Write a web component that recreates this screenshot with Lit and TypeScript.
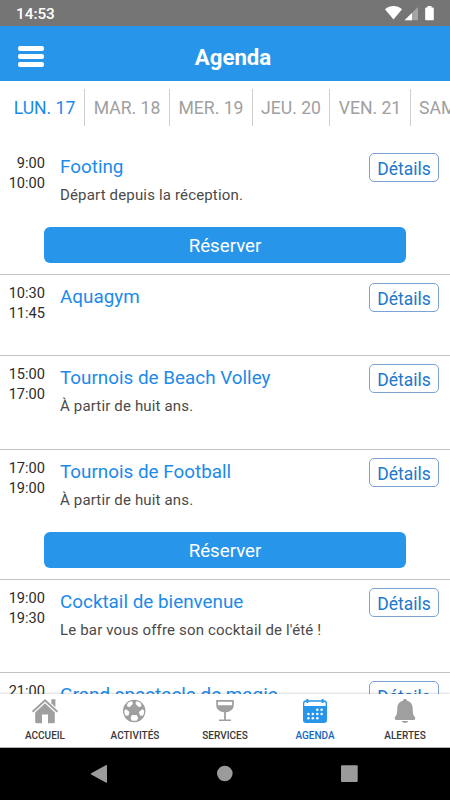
import { LitElement, html, css, svg, nothing } from "lit";
import { customElement } from "lit/decorators.js";
import { classMap } from "lit/directives/class-map.js";

interface AgendaEvent {
  start: string;
  end: string;
  title: string;
  note?: string;
  bookable?: boolean;
  size: string;
}

const DAYS = [
  { label: "LUN. 17", key: "mon" },
  { label: "MAR. 18", key: "tue" },
  { label: "MER. 19", key: "wed" },
  { label: "JEU. 20", key: "thu" },
  { label: "VEN. 21", key: "fri" },
  { label: "SAM. 22", key: "sat" },
];

const EVENTS: AgendaEvent[] = [
  { start: "9:00", end: "10:00", title: "Footing", note: "Départ depuis la réception.", bookable: true, size: "tall" },
  { start: "10:30", end: "11:45", title: "Aquagym", size: "short" },
  { start: "15:00", end: "17:00", title: "Tournois de Beach Volley", note: "À partir de huit ans.", size: "medium" },
  { start: "17:00", end: "19:00", title: "Tournois de Football", note: "À partir de huit ans.", bookable: true, size: "tall" },
  { start: "19:00", end: "19:30", title: "Cocktail de bienvenue", note: "Le bar vous offre son cocktail de l'été !", size: "medium" },
  { start: "21:00", end: "22:30", title: "Grand spectacle de magie", size: "medium" },
];

const ICONS = {
  home: svg`
    <path d="M20.4 1.2h4v8l-4-4z"/>
    <path d="M1.600 13.800 14 2.200l12.400 11.600" fill="none" stroke="currentColor" stroke-width="1.900"/>
    <path d="M14 5.200 4.200 14.400V24q0 1.300 1.300 1.300H11V16.500h6v8.800h5.500q1.300 0 1.300-1.300v-9.600z"/>`,
  ball: svg`
    <circle cx="13.200" cy="13" r="11.200"/>
    <g fill="#fff">
      <path d="M11.300 16.900h4q.6 0 .8.600l.9 2.600q.2.600-.3 1l-.8 1.200q-.3.500-.9.500h-3.400q-.6 0-.9-.5l-.8-1.200q-.4-.4-.2-1l.9-2.600q.2-.6.700-.6z"/>
      <path d="M6.800 4.900q2-1.600 3.700-1.700.6 0 .8.500l.5 1.500q.1.600-.3 1L9 8.700q-.5.400-1.100.2l-1.200-.3q-.6-.2-.6-.8-.2-1.600.7-2.900z"/>
      <path d="M19.600 4.900q-2-1.600-3.700-1.700-.6 0-.8.500l-.5 1.500q-.1.600.3 1l2.500 2.500q.5.400 1.100.2l1.200-.3q.6-.2.600-.8.200-1.600-.7-2.900z"/>
      <path d="M3.300 13.400q0-.6.400-1.100l.7-.7q.5-.5 1 0l2.600 2q.4.400.3.900l-.6 2.400q-.2.600-.8.700l-1.700.2q-.6 0-.8-.5-1.100-1.800-1.100-3.900z"/>
      <path d="M23.100 13.400q0-.6-.4-1.100l-.7-.7q-.5-.5-1 0l-2.600 2q-.4.400-.3.900l.6 2.400q.2.600.8.700l1.700.2q.6 0 .8-.5 1.100-1.800 1.100-3.900z"/>
    </g>`,
  glass: svg`
    <path fill-rule="evenodd" d="M5.200 2.100h17.600v4.500c0 4.700-3.300 7.300-7.900 7.600v7.200h5.100v1.500H8v-1.500h5.100v-7.200c-4.600-.3-7.900-2.900-7.900-7.600zM6.900 3.700v3.600h14.200V3.700z"/>`,
  calendar: svg`
    <path fill-rule="evenodd" d="M5.400 2.300V.9h1.900v1.400h13.400V.9h1.900v1.400c2.300 0 3.400 1.200 3.400 3.100v16.700c0 1.800-1.100 3-3 3H5c-1.900 0-3-1.200-3-3V5.400c0-1.900 1.100-3.100 3.400-3.100zM3.300 8h21.400V5.700c0-1.300-.9-2-2.100-2v1.200h-1.900V3.700H7.300v1.200H5.400V3.700c-1.200 0-2.100.7-2.100 2z"/>
    <g fill="#fff">
      <circle cx="16.300" cy="11.700" r="1.250"/><circle cx="20.600" cy="11.700" r="1.250"/>
      <circle cx="7.400" cy="16" r="1.250"/><circle cx="11.800" cy="16" r="1.250"/><circle cx="16.300" cy="16" r="1.250"/><circle cx="20.600" cy="16" r="1.250"/>
      <circle cx="7.400" cy="20.300" r="1.250"/><circle cx="11.800" cy="20.300" r="1.250"/><circle cx="16.300" cy="20.300" r="1.250"/>
    </g>`,
  bell: svg`
    <path d="M14 1c1.200 0 2 .7 2 1.700 3.700.9 5.700 3.900 5.700 7.700 0 5.200.7 6.900 2.300 8.600.5.600.2 3-.8 3H4.800c-1 0-1.300-2.400-.8-3 1.600-1.700 2.300-3.400 2.300-8.600 0-3.800 2-6.800 5.700-7.700 0-1 .8-1.700 2-1.700z"/>
    <path d="M10.600 22.900h6.800c-.7 1.300-1.900 2-3.400 2s-2.700-.7-3.400-2z"/>`,
};

const NAV = [
  { label: "ACCUEIL", icon: ICONS.home },
  { label: "ACTIVITÉS", icon: ICONS.ball },
  { label: "SERVICES", icon: ICONS.glass },
  { label: "AGENDA", icon: ICONS.calendar, active: true },
  { label: "ALERTES", icon: ICONS.bell },
];

@customElement("app-root")
export class AppRoot extends LitElement {
  static styles = css`
    :host {
      display: flex;
      flex-direction: column;
      height: 800px;
      width: 450px;
      overflow: hidden;
      background: #fff;
      color: #202020;
      font-family: Roboto, "Liberation Sans", sans-serif;
    }
    * { box-sizing: border-box; }
    svg { display: block; }
    .status {
      flex: none;
      height: 26px;
      display: flex;
      align-items: center;
      justify-content: space-between;
      padding: 2px 15px 0 16px;
      background: #757575;
      color: #fff;
      font-size: 15.300px;
      font-weight: 500;
      line-height: 24px;
    }
    .status svg { margin-top: -3px; }
    .header {
      flex: none;
      height: 55px;
      display: grid;
      grid-template-columns: 44px 1fr 44px;
      align-items: center;
      padding-top: 6px;
      background: #2795e9;
      color: #fff;
    }
    .menu {
      display: grid;
      gap: 3px;
      width: 26px;
      margin: -1px 0 0 18px;
    }
    .menu i { height: 5px; border-radius: 2px; background: #fff; }
    .header h1 {
      margin: 0 0 0 16px;
      text-align: center;
      font-size: 22.200px;
      line-height: 30px;
      font-weight: 700;
    }
    .days {
      flex: none;
      height: 64px;
      display: flex;
      padding-top: 8px;
      overflow: hidden;
      white-space: nowrap;
      color: #a0a0a0;
      font-size: 17.600px;
      line-height: 38px;
    }
    .day {
      flex: none;
      height: 37px;
      text-align: center;
      border-right: 1px solid #cfcfcf;
    }
    .day.mon { width: 85px; padding-left: 5px; color: #1c8aea; }
    .day.tue { width: 85px; }
    .day.wed { width: 83px; }
    .day.thu { width: 77px; }
    .day.fri { width: 81px; }
    .day.sat { width: 85px; padding-left: 8px; text-align: left; }
    .events { flex: 1; min-height: 0; overflow: hidden; }
    .event {
      display: grid;
      grid-template-columns: 45px 1fr 70px;
      grid-template-rows: auto auto;
      align-content: start;
      column-gap: 15px;
      padding: 8px 11px 0 0;
      border-bottom: 1px solid #c4c4c4;
    }
    .tall { height: 130px; }
    .short { height: 81px; }
    .medium { height: 93.700px; }
    .time {
      text-align: right;
      font-size: 14.600px;
      line-height: 20px;
      color: #2c2c2c;
    }
    .body { white-space: nowrap; }
    .title {
      color: #1c8aea;
      font-size: 18.850px;
      line-height: 28px;
    }
    .note {
      color: #4a4a4a;
      font-size: 15px;
      letter-spacing: 0.160px;
      line-height: 20px;
      margin-top: 4px;
    }
    .details {
      height: 29px;
      border: 1px solid #7ba3d3;
      border-radius: 5px;
      color: #2078cc;
      text-align: center;
      font-size: 17.500px;
      line-height: 30px;
    }
    .book {
      grid-column: 1 / -1;
      width: 362px;
      height: 36px;
      margin: 22px 0 0 44px;
      border-radius: 6px;
      background: #2795e9;
      color: #fff;
      text-align: center;
      font-size: 18.700px;
      line-height: 38px;
    }
    .nav {
      flex: none;
      position: relative;
      height: 54px;
      display: grid;
      grid-template-columns: repeat(5, 1fr);
      background: #fff;
      border-bottom: 1px solid #b0b0b0;
      box-shadow: 0 -1px 2px rgba(0, 0, 0, 0.14);
    }
    .item {
      display: flex;
      flex-direction: column;
      align-items: center;
      gap: 4px;
      padding-top: 4px;
      color: #9f9f9f;
    }
    .item span {
      color: #383838;
      font-size: 10px;
      font-weight: 500;
      line-height: 14px;
    }
    .item.active { color: #2795e9; }
    .item.active span { color: #1767c4; }
    .system {
      flex: none;
      height: 52px;
      background: #000;
    }
  `;

  private renderEvent(e: AgendaEvent) {
    return html`
      <article class="event ${e.size}">
        <div class="time"><div>${e.start}</div><div>${e.end}</div></div>
        <div class="body">
          <div class="title">${e.title}</div>
          ${e.note ? html`<div class="note">${e.note}</div>` : nothing}
        </div>
        <div class="details">Détails</div>
        ${e.bookable ? html`<div class="book">Réserver</div>` : nothing}
      </article>
    `;
  }

  render() {
    return html`
      <div class="status">
        <span class="clock">14:53</span>
        <svg width="50" height="16" viewBox="0 0 50 16" fill="#fff">
          <path d="M0 4.200C5-.2 12-.2 17 4.200L8.500 14.500z"/>
          <path d="M33 2v13.300H19.500z" fill-opacity=".35"/>
          <path d="M27 8v7.300h-7.500z"/>
          <path d="M42.500 1h4v1.500h1.500q.8 0 .8.800v11.200q0 .8-.8.800h-7q-.8 0-.8-.8V3.300q0-.8.8-.8h1.500z"/>
        </svg>
      </div>
      <header class="header">
        <div class="menu"><i></i><i></i><i></i></div>
        <h1>Agenda</h1>
      </header>
      <nav class="days">
        ${DAYS.map((d) => html`<div class="day ${d.key}">${d.label}</div>`)}
      </nav>
      <main class="events">${EVENTS.map((e) => this.renderEvent(e))}</main>
      <nav class="nav">
        ${NAV.map(
          (n) => html`
            <div class=${classMap({ item: true, active: !!n.active })}>
              <svg width="28" height="27" viewBox="0 0 28 27" fill="currentColor">${n.icon}</svg>
              <span>${n.label}</span>
            </div>
          `
        )}
      </nav>
      <div class="system">
        <svg width="450" height="52" viewBox="0 0 450 52" fill="#9b9b9b">
          <path d="M91.200 25.200 106.200 17q.8-.3.8.6v16.600q0 .9-.8.500L91.200 26.500q-.8-.6 0-1.300z"/>
          <circle cx="224.800" cy="25.500" r="7.800"/>
          <rect x="341" y="17.200" width="16.700" height="16.700" rx="1"/>
        </svg>
      </div>
    `;
  }
}
